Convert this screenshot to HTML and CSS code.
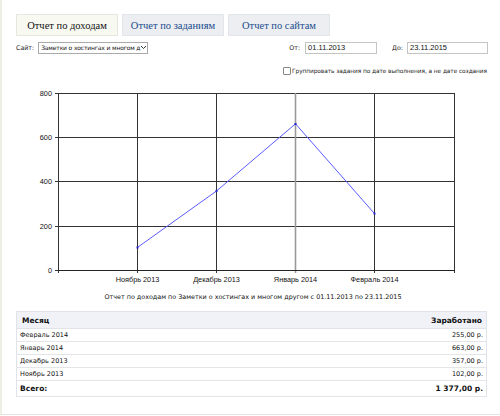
FILE: index.html
```html
<!DOCTYPE html>
<html lang="ru">
<head>
<meta charset="utf-8">
<link rel="stylesheet" href="styles.css">
</head>
<body>
<div class="page">
  <div class="tabs">
    <div class="tab active">Отчет по доходам</div>
    <div class="tab">Отчет по заданиям</div>
    <div class="tab">Отчет по сайтам</div>
  </div>
  <div class="filters">
    <div class="group">
      <span class="lbl">Сайт:</span>
      <div class="select"><span class="sel-text">Заметки о хостингах и многом д</span><span class="chev"><svg width="7" height="5" viewBox="0 0 7 5"><path d="M1 1 L3.5 3.5 L6 1" fill="none" stroke="#333" stroke-width="1"/></svg></span></div>
    </div>
    <div class="group dates">
      <span class="lbl">От:</span>
      <div class="input in-from">01.11.2013</div>
      <span class="lbl lbl-to">До:</span>
      <div class="input in-to">23.11.2015</div>
    </div>
  </div>
  <div class="check-row">
    <span class="checkbox"></span>
    <span class="lbl check-lbl">Группировать задания по дате выполнения, а не дате создания</span>
  </div>
  <svg class="chart" width="468" height="200" viewBox="16 86 468 200">
    <g stroke="#333" stroke-width="1" fill="none" shape-rendering="crispEdges">
      <line x1="58" y1="93.5" x2="454" y2="93.5"/>
      <line x1="58" y1="137.5" x2="454" y2="137.5"/>
      <line x1="58" y1="181.5" x2="454" y2="181.5"/>
      <line x1="58" y1="226.5" x2="454" y2="226.5"/>
      <line x1="137.5" y1="93" x2="137.5" y2="273"/>
      <line x1="216.5" y1="93" x2="216.5" y2="273"/>
      <line x1="374.5" y1="93" x2="374.5" y2="273"/>
      <line x1="454.5" y1="93" x2="454.5" y2="273"/>
      <line x1="58.5" y1="93" x2="58.5" y2="273"/>
      <line x1="55" y1="93.5" x2="58" y2="93.5"/>
      <line x1="55" y1="137.5" x2="58" y2="137.5"/>
      <line x1="55" y1="181.5" x2="58" y2="181.5"/>
      <line x1="55" y1="226.5" x2="58" y2="226.5"/>
      <line x1="55" y1="270.5" x2="58" y2="270.5"/>
    </g>
    <line x1="295.5" y1="93" x2="295.5" y2="273" stroke="#999" stroke-width="1.6"/>
    <line x1="58" y1="270.5" x2="455" y2="270.5" stroke="#222" stroke-width="1" shape-rendering="crispEdges"/>
    <polyline points="137.5,247.4 216.5,191 295.5,123.8 374.5,213.6" fill="none" stroke="#5a5aff" stroke-width="1"/>
    <g fill="#2a2ad0">
      <rect x="136.5" y="246.5" width="2" height="2"/>
      <rect x="215.5" y="190" width="2" height="2"/>
      <rect x="294.5" y="123" width="2" height="2"/>
      <rect x="373.5" y="212.6" width="2" height="2"/>
    </g>
    <g class="ax" text-anchor="end">
      <text x="52" y="96">800</text>
      <text x="52" y="140">600</text>
      <text x="52" y="184">400</text>
      <text x="52" y="229">200</text>
      <text x="52" y="273">0</text>
    </g>
    <g class="ax" text-anchor="middle">
      <text x="137.5" y="282">Ноябрь 2013</text>
      <text x="216.5" y="282">Декабрь 2013</text>
      <text x="295.5" y="282">Январь 2014</text>
      <text x="374.5" y="282">Февраль 2014</text>
    </g>
  </svg>
  <p class="caption">Отчет по доходам по Заметки о хостингах и многом другом с 01.11.2013 по 23.11.2015</p>
  <table class="report">
    <thead>
      <tr><th class="c-month">Месяц</th><th class="c-sum">Заработано</th></tr>
    </thead>
    <tbody>
      <tr><td>Февраль 2014</td><td class="c-sum">255,00 р.</td></tr>
      <tr><td>Январь 2014</td><td class="c-sum">663,00 р.</td></tr>
      <tr><td>Декабрь 2013</td><td class="c-sum">357,00 р.</td></tr>
      <tr><td>Ноябрь 2013</td><td class="c-sum">102,00 р.</td></tr>
      <tr class="total"><td>Всего:</td><td class="c-sum">1 377,00 р.</td></tr>
    </tbody>
  </table>
</div>
</body>
</html>
```

FILE: styles.css
```css
html, body {
  margin: 0;
  padding: 0;
  background: #ffffff;
}
body {
  font-family: "DejaVu Sans", Verdana, sans-serif;
  color: #111;
}
.page {
  width: 500px;
  height: 415px;
  box-sizing: border-box;
  border-left: 2px solid #eeeee2;
  border-bottom: 1px solid #e2e2e2;
  padding: 14px 12px 0 14px;
}
.tabs {
  display: flex;
  gap: 4px;
}
.tab {
  width: 102px;
  height: 22px;
  box-sizing: border-box;
  border: 1px solid #e2e5ea;
  background: #eceef2;
  color: #1b4d8c;
  font-family: "Liberation Serif", "Times New Roman", serif;
  font-size: 10.5px;
  display: flex;
  align-items: center;
  justify-content: center;
}
.tab.active {
  background: #f8f9f1;
  color: #111;
  border-color: #e6e8e0;
}
.filters {
  margin-top: 5px;
  display: flex;
  justify-content: space-between;
  align-items: center;
  height: 13px;
}
.group {
  display: flex;
  align-items: center;
}
.lbl {
  font-size: 6.3px;
  color: #222;
}
.select {
  margin-left: 4px;
  width: 110px;
  height: 12px;
  box-sizing: border-box;
  border: 1px solid #aaa;
  display: flex;
  align-items: center;
  padding-left: 2px;
  font-size: 6px;
  white-space: nowrap;
}
.sel-text {
  flex: 1;
  letter-spacing: -0.15px;
}
.chev {
  width: 8px;
  display: flex;
  align-items: center;
  justify-content: center;
}
.input {
  height: 12px;
  box-sizing: border-box;
  border: 1px solid #c4c4c4;
  font-family: "Liberation Sans", Arial, sans-serif;
  font-size: 7.5px;
  display: flex;
  align-items: center;
  padding-left: 2px;
  color: #111;
}
.in-from {
  width: 72px;
  margin-left: 5px;
}
.lbl-to {
  margin-left: 15px;
}
.in-to {
  width: 81px;
  margin-left: 4px;
}
.check-row {
  margin-top: 12px;
  display: flex;
  justify-content: flex-end;
  align-items: center;
  height: 10px;
  padding-right: 1px;
}
.check-lbl {
  font-size: 5.8px;
  letter-spacing: -0.05px;
}
.checkbox {
  width: 6px;
  height: 6px;
  border: 1px solid #888;
  border-radius: 1px;
  margin-right: 1px;
  background: #fff;
}
.chart {
  display: block;
  margin-top: 10px;
}
.ax {
  font-family: "Liberation Sans", Arial, sans-serif;
  font-size: 7.3px;
  fill: #111;
}
.caption {
  margin: 7px 0 0 0;
  text-align: center;
  font-size: 6.4px;
  color: #111;
  width: 474px;
}
.report {
  margin-top: 10px;
  width: 471px;
  border-collapse: collapse;
  border: 1px solid #e0e3e8;
  font-size: 6.5px;
}
.report th {
  height: 16px;
  padding: 0 5px;
  background: #f0f2f8;
  font-size: 7.5px;
  font-weight: bold;
  text-align: left;
  border-bottom: 1px solid #e0e3e8;
}
.report td {
  height: 12px;
  padding: 0 3px;
  border-bottom: 1px solid #e4e5e8;
}
.report th.c-sum, .report td.c-sum {
  text-align: right;
}
.report th.c-sum {
  padding-right: 4px;
}
.report td.c-sum {
  padding-right: 3px;
}
.c-month {
  width: 229px;
}
.report tr.total td {
  height: 15px;
  font-weight: bold;
  font-size: 7.5px;
}
```
